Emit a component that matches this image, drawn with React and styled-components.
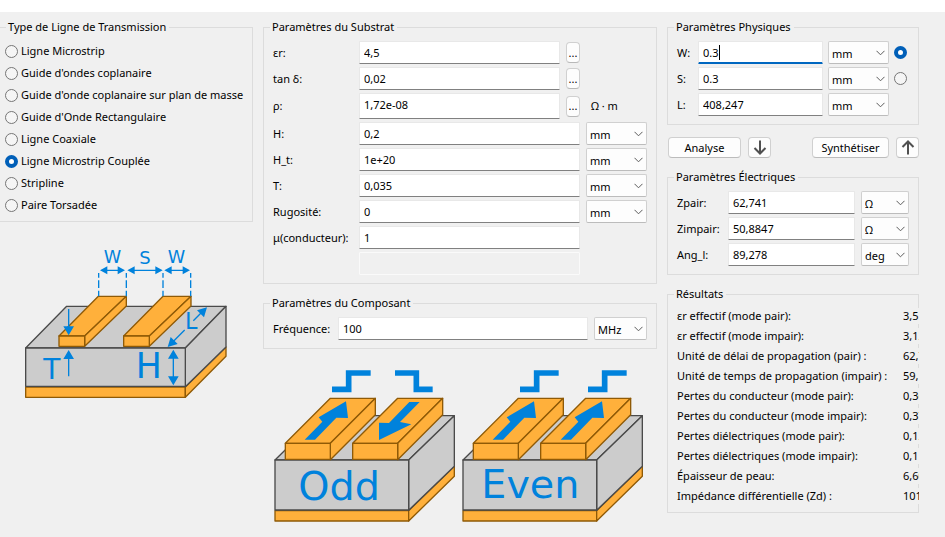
import React from "react";
import styled, { createGlobalStyle } from "styled-components";

const GlobalStyle = createGlobalStyle`
  *, *::before, *::after { box-sizing: border-box; }
  body { margin: 0; background: #fff; }
  body, input, select, button {
    font-family: "Noto Sans", "Open Sans", sans-serif;
    font-size: 11px;
    line-height: 16px;
    color: #000;
  }
`;

const Window = styled.main`
  display: grid;
  grid-template-columns: 253px minmax(394px, 1fr) 252px;
  column-gap: 10px;
  min-height: calc(100vh - 12px);
  margin-top: 12px;
  padding: 7px 26px 0 0;
  background: #f0f0f0;
`;

const Column = styled.div`
  display: flex;
  flex-direction: column;
  align-items: stretch;
  min-width: 0;
`;

const Group = styled.fieldset`
  min-width: 0;
  margin: ${(p) => p.$top || 0}px 0 0;
  padding: 0;
  border: 1px solid #dcdcdc;
  border-left-width: ${(p) => (p.$flush ? 0 : 1)}px;
`;

const Legend = styled.legend`
  margin-left: 6px;
  padding: 0 3px 0 2px;
  white-space: nowrap;
`;

const RadioList = styled.div`
  display: flex;
  flex-direction: column;
  padding: 5px;
`;

const RadioLabel = styled.label`
  display: flex;
  align-items: center;
  gap: 3px;
  height: 22px;
  white-space: nowrap;
`;

const Radio = styled.input.attrs({ type: "radio" })`
  appearance: none;
  flex: none;
  width: 13px;
  height: 13px;
  margin: 0;
  border: 1px solid #767676;
  border-radius: 50%;
  background: #f5f5f5;
  &:checked {
    border: 4px solid #005fb8;
    background: #fff;
  }
`;

const FormGrid = styled.div`
  display: grid;
  grid-template-columns: ${(p) => p.$columns};
  column-gap: ${(p) => p.$gap || 6}px;
  row-gap: 3px;
  align-items: center;
  padding: 6px 9px 8px;
`;

const FieldLabel = styled.label`
  white-space: nowrap;
`;

const TextBox = styled.input.attrs({ type: "text" })`
  width: 100%;
  min-width: 0;
  height: ${(p) => (p.$tall ? 26 : 23)}px;
  grid-column: span ${(p) => p.$span || 1};
  padding: 0 4px ${(p) => (p.$tall ? 4 : 1)}px;
  border: 1px solid #e8e8e8;
  border-bottom: 1px solid #808080;
  border-radius: 1px;
  background: #fff;
  outline: none;
  &:disabled {
    border-color: #fafafa;
    background: #f0f0f0;
  }
`;

const ActiveField = styled.div`
  position: relative;
  display: flex;
  ${TextBox} { border-bottom: 2px solid #0067c0; padding-bottom: 0; }
`;

const Caret = styled.span`
  position: absolute;
  left: 21px;
  top: 4px;
  width: 1px;
  height: 15px;
  background: #000;
`;

const MoreButton = styled.button`
  height: 21px;
  padding: 0;
  border: 1px solid #d0d0d0;
  border-bottom-color: #b8b8b8;
  border-radius: 4px;
  background: #fdfdfd;
`;

const UnitText = styled.span`
  padding-left: 5px;
`;

const SelectBox = styled.span`
  display: grid;
  align-items: center;
  min-width: 0;
  height: 23px;
  > * { grid-area: 1 / 1; }
  > svg { justify-self: end; margin-right: 4px; pointer-events: none; }
`;

const NativeSelect = styled.select`
  appearance: none;
  width: 100%;
  height: 23px;
  padding: 2px 3px 0;
  border: 1px solid #d0d0d0;
  border-bottom-color: #bcbcbc;
  border-radius: 2px;
  background: #fdfdfd;
`;

const FrequencyRow = styled.div`
  display: flex;
  align-items: center;
  gap: 6px;
  padding: 6px 9px 8px;
  ${FieldLabel} { flex: 0 0 59px; }
  ${SelectBox} { flex: 0 0 53px; }
`;

const ActionBar = styled.div`
  display: flex;
  gap: 7px;
  margin-top: 12px;
  padding-left: 1px;
`;

const ActionButton = styled.button`
  display: flex;
  align-items: center;
  justify-content: center;
  flex: 0 0 ${(p) => p.$width}px;
  height: 21px;
  margin-left: ${(p) => (p.$push ? "auto" : 0)};
  padding: 0;
  border: 1px solid #d0d0d0;
  border-bottom-color: #bcbcbc;
  border-radius: 4px;
  background: #fdfdfd;
`;

const ResultList = styled.dl`
  display: grid;
  grid-template-columns: minmax(0, 1fr) 16px;
  margin: 0 -1px 0 0;
  padding: 4px 0 6px 9px;
`;

const ResultName = styled.dt`
  height: 20px;
  padding-top: 2px;
  white-space: nowrap;
`;

const ResultValue = styled.dd`
  height: 16px;
  margin: 2px 0;
  overflow: hidden;
  white-space: nowrap;
  background: #f0f0f0;
`;

const LineDrawing = styled.svg`
  width: 230px;
  height: 175px;
  margin: 13px 0 0 10px;
`;

const ModeRow = styled.div`
  display: flex;
  margin: 6px 0 0 7px;
`;

const ModeSvg = styled.svg`
  flex: none;
  width: 188px;
  height: 172px;
`;

const DrawingText = styled.text`
  font-family: "DejaVu Sans", sans-serif;
  font-size: ${(p) => p.$size}px;
  fill: #0082dc;
`;

const lineTypes = [
  "Ligne Microstrip",
  "Guide d'ondes coplanaire",
  "Guide d'onde coplanaire sur plan de masse",
  "Guide d'Onde Rectangulaire",
  "Ligne Coaxiale",
  "Ligne Microstrip Couplée",
  "Stripline",
  "Paire Torsadée",
];

const results = [
  ["εr effectif (mode pair):", "3,5"],
  ["εr effectif (mode impair):", "3,12"],
  ["Unité de délai de propagation (pair) :", "62,7"],
  ["Unité de temps de propagation (impair) :", "59,"],
  ["Pertes du conducteur (mode pair):", "0,36"],
  ["Pertes du conducteur (mode impair):", "0,37"],
  ["Pertes diélectriques (mode pair):", "0,12"],
  ["Pertes diélectriques (mode impair):", "0,1"],
  ["Épaisseur de peau:", "6,60"],
  ["Impédance différentielle (Zd) :", "101"],
];

function Select({ label, value }) {
  return (
    <SelectBox>
      <NativeSelect aria-label={label} defaultValue={value}>
        <option>{value}</option>
      </NativeSelect>
      <svg width="9" height="6" viewBox="0 0 9 6" fill="none" stroke="#5c5c5c">
        <path d="M.5 .8 4.5 4.8 8.5 .8" />
      </svg>
    </SelectBox>
  );
}

function Field({ id, label, value, span, tall }) {
  return (
    <>
      <FieldLabel htmlFor={id}>{label}</FieldLabel>
      <TextBox id={id} defaultValue={value} $span={span} $tall={tall} />
    </>
  );
}

function Arrow({ up }) {
  return (
    <svg width="14" height="15" viewBox="0 0 14 15" fill="none" stroke="#505050" strokeWidth="2">
      <path d={up ? "M7 14.5V2M1.5 7 7 1.5 12.5 7" : "M7 .5V13M1.5 8 7 13.5 12.5 8"} />
    </svg>
  );
}

const copper = { fill: "#ffb03b", stroke: "#8f5a06", strokeWidth: 4, strokeLinejoin: "round" };
const board = { fill: "#ccc", stroke: "#4a4a4a", strokeWidth: 4, strokeLinejoin: "round" };

function CoupledLine() {
  return (
    <LineDrawing viewBox="0 0 690 525" role="img" aria-label="Ligne microstrip couplée">
      <g {...copper}>
        <path d="M47 456H526V487H47Z" />
        <path d="M526 456 648 336V364L526 487Z" />
      </g>
      <g {...board}>
        <path d="M47 339 170 214H648L526 339Z" />
        <path d="M526 339 648 214V336L526 455Z" />
        <path d="M47 339H526V454H47Z" />
      </g>
      {[0, 194].map((x) => (
        <g key={x} transform={`translate(${x} 0)`} {...copper}>
          <path d="M147 303 265 184H349L224 303Z" />
          <path d="M224 303 349 184V213L224 334Z" />
          <path d="M147 303H224V334H147Z" />
        </g>
      ))}
      <g stroke="#0082dc" strokeWidth="4" fill="none">
        <path strokeDasharray="23 8" strokeDashoffset="9" d="M266 114V184M349 114V184M459 114V184M542 114V184" />
        <path d="M280 106H336M362 106H448M473 106H530M176 222V280M176 424V365M490 365V432" />
        <path d="M550 257 576 231M524 285 486 323" />
      </g>
      <g fill="#0082dc">
        <path d="M270 106 292 94V118ZM345 106 323 94V118ZM352 106 374 94V118ZM458 106 436 94V118ZM463 106 485 94V118ZM540 106 518 94V118Z" />
        <path d="M176 301 160 274H192ZM176 345 160 372H192ZM490 344 474 371H506ZM490 451 474 424H506Z" />
        <path d="M591 217 582 247 561 226ZM473 336 482 306 503 327Z" />
      </g>
      <DrawingText x="281" y="84" $size={53}>W</DrawingText>
      <DrawingText x="388" y="87" $size={54}>S</DrawingText>
      <DrawingText x="473" y="84" $size={53}>W</DrawingText>
      <DrawingText x="525" y="282" $size={67}>L</DrawingText>
      <DrawingText x="100" y="431" $size={84}>T</DrawingText>
      <DrawingText x="377" y="429" $size={104}>H</DrawingText>
    </LineDrawing>
  );
}

function ModeDrawing({ label, reversed }) {
  return (
    <ModeSvg viewBox="30 0 564 516" role="img" aria-label={label}>
      <g {...copper}>
        <path d="M45 467H446V498H45Z" />
        <path d="M446 467 583 334V364L446 498Z" />
      </g>
      <g {...board}>
        <path d="M45 315 180 182H583L446 315Z" />
        <path d="M446 315 583 182V334L446 466Z" />
        <path d="M45 315H446V465H45Z" />
      </g>
      {[0, 202].map((x) => (
        <g key={x} transform={`translate(${x} 0)`} {...copper}>
          <path d="M76 265 211 130H346L211 265Z" />
          <path d="M211 265 346 130V179L211 314Z" />
          <path d="M76 265H211V313H76Z" />
        </g>
      ))}
      <g fill="#0082dc">
        <path d="M134 254 187 200 176 187 258 139 264 189 229 188 165 254Z" />
        {reversed ? (
          <path d="M479 141 420 201 454 208 357 255V203L387 204 448 141Z" />
        ) : (
          <path d="M338 254 391 200 380 187 462 139 468 189 433 188 369 254Z" />
        )}
      </g>
      <g fill="none" stroke="#0082dc" strokeWidth="17">
        <path d="M216 103H266V54H332" />
        <path d={reversed ? "M405 54H469V103H518" : "M420 103H470V54H536"} />
      </g>
      <DrawingText x={reversed ? 115 : 100} y={reversed ? 436 : 430} $size={119}>{label}</DrawingText>
    </ModeSvg>
  );
}

export default function App() {
  return (
    <>
      <GlobalStyle />
      <Window>
        <Column>
          <Group $flush>
            <Legend>Type de Ligne de Transmission</Legend>
            <RadioList>
              {lineTypes.map((name) => (
                <RadioLabel key={name}>
                  <Radio name="line" defaultChecked={name === "Ligne Microstrip Couplée"} />
                  {name}
                </RadioLabel>
              ))}
            </RadioList>
          </Group>
          <CoupledLine />
        </Column>

        <Column>
          <Group>
            <Legend>Paramètres du Substrat</Legend>
            <FormGrid $columns="80px minmax(0, 1fr) 14px 61px">
              <Field id="er" label="εr:" value="4,5" />
              <MoreButton aria-label="Choisir εr">...</MoreButton>
              <span />
              <Field id="tand" label="tan δ:" value="0,02" />
              <MoreButton aria-label="Choisir tan δ">...</MoreButton>
              <span />
              <Field id="rho" label="ρ:" value="1,72e-08" tall />
              <MoreButton aria-label="Choisir ρ">...</MoreButton>
              <UnitText>Ω · m</UnitText>
              <Field id="h" label="H:" value="0,2" span={2} />
              <Select label="Unité H" value="mm" />
              <Field id="ht" label="H_t:" value="1e+20" span={2} />
              <Select label="Unité H_t" value="mm" />
              <Field id="t" label="T:" value="0,035" span={2} />
              <Select label="Unité T" value="mm" />
              <Field id="rough" label="Rugosité:" value="0" span={2} />
              <Select label="Unité rugosité" value="mm" />
              <Field id="mu" label="μ(conducteur):" value="1" span={2} />
              <span />
              <span />
              <TextBox aria-label="Paramètre inutilisé" disabled $span={2} />
            </FormGrid>
          </Group>
          <Group $top={11}>
            <Legend>Paramètres du Composant</Legend>
            <FrequencyRow>
              <Field id="freq" label="Fréquence:" value="100" />
              <Select label="Unité fréquence" value="MHz" />
            </FrequencyRow>
          </Group>
          <ModeRow>
            <ModeDrawing label="Odd" reversed />
            <ModeDrawing label="Even" />
          </ModeRow>
        </Column>

        <Column>
          <Group>
            <Legend>Paramètres Physiques</Legend>
            <FormGrid $columns="16px minmax(0, 1fr) 61px 15px" $gap={5}>
              <FieldLabel htmlFor="w">W:</FieldLabel>
              <ActiveField>
                <TextBox id="w" defaultValue="0.3" />
                <Caret />
              </ActiveField>
              <Select label="Unité W" value="mm" />
              <Radio name="target" aria-label="Synthétiser W" defaultChecked />
              <Field id="s" label="S:" value="0.3" />
              <Select label="Unité S" value="mm" />
              <Radio name="target" aria-label="Synthétiser S" />
              <Field id="l" label="L:" value="408,247" />
              <Select label="Unité L" value="mm" />
            </FormGrid>
          </Group>
          <ActionBar>
            <ActionButton $width={73}>Analyse</ActionButton>
            <ActionButton $width={23} aria-label="Vers le bas"><Arrow /></ActionButton>
            <ActionButton $width={77} $push>Synthétiser</ActionButton>
            <ActionButton $width={23} aria-label="Vers le haut"><Arrow up /></ActionButton>
          </ActionBar>
          <Group $top={11}>
            <Legend>Paramètres Électriques</Legend>
            <FormGrid $columns="45px minmax(0, 1fr) 48px">
              <Field id="zeven" label="Zpair:" value="62,741" />
              <Select label="Unité Zpair" value="Ω" />
              <Field id="zodd" label="Zimpair:" value="50,8847" />
              <Select label="Unité Zimpair" value="Ω" />
              <Field id="ang" label="Ang_l:" value="89,278" />
              <Select label="Unité Ang_l" value="deg" />
            </FormGrid>
          </Group>
          <Group $top={11}>
            <Legend>Résultats</Legend>
            <ResultList>
              {results.map(([name, value]) => (
                <React.Fragment key={name}>
                  <ResultName>{name}</ResultName>
                  <ResultValue>{value}</ResultValue>
                </React.Fragment>
              ))}
            </ResultList>
          </Group>
        </Column>
      </Window>
    </>
  );
}
